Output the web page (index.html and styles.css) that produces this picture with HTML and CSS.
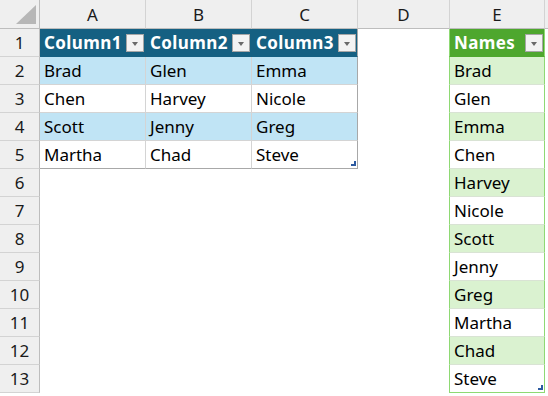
FILE: index.html
```html
<!DOCTYPE html>
<html>
<head>
<meta charset="utf-8">
<link rel="stylesheet" href="styles.css">
</head>
<body>
<div class="sheet">
  <div class="corner"><span class="tri"></span></div>
  <div class="ch">A</div><div class="ch">B</div><div class="ch">C</div><div class="ch">D</div><div class="ch">E</div><div class="ch ch-rest"></div>

  <div class="rh">1</div>
  <div class="c th">Column1<span class="fb"></span></div>
  <div class="c th">Column2<span class="fb"></span></div>
  <div class="c th tr">Column3<span class="fb"></span></div>
  <div class="c"></div>
  <div class="c gh">Names<span class="fb"></span></div>
  <div class="c"></div>

  <div class="rh">2</div>
  <div class="c bb">Brad</div><div class="c bb">Glen</div><div class="c bb tr">Emma</div>
  <div class="c"></div><div class="c gb gband">Brad</div><div class="c"></div>

  <div class="rh">3</div>
  <div class="c bw">Chen</div><div class="c bw">Harvey</div><div class="c bw tr">Nicole</div>
  <div class="c"></div><div class="c gb">Glen</div><div class="c"></div>

  <div class="rh">4</div>
  <div class="c bb">Scott</div><div class="c bb">Jenny</div><div class="c bb tr">Greg</div>
  <div class="c"></div><div class="c gb gband">Emma</div><div class="c"></div>

  <div class="rh">5</div>
  <div class="c bw last">Martha</div><div class="c bw last">Chad</div><div class="c bw last tr">Steve<span class="handle"></span></div>
  <div class="c"></div><div class="c gb">Chen</div><div class="c"></div>

  <div class="rh">6</div>
  <div class="c"></div><div class="c"></div><div class="c"></div><div class="c"></div><div class="c gb gband">Harvey</div><div class="c"></div>
  <div class="rh">7</div>
  <div class="c"></div><div class="c"></div><div class="c"></div><div class="c"></div><div class="c gb">Nicole</div><div class="c"></div>
  <div class="rh">8</div>
  <div class="c"></div><div class="c"></div><div class="c"></div><div class="c"></div><div class="c gb gband">Scott</div><div class="c"></div>
  <div class="rh">9</div>
  <div class="c"></div><div class="c"></div><div class="c"></div><div class="c"></div><div class="c gb">Jenny</div><div class="c"></div>
  <div class="rh">10</div>
  <div class="c"></div><div class="c"></div><div class="c"></div><div class="c"></div><div class="c gb gband">Greg</div><div class="c"></div>
  <div class="rh">11</div>
  <div class="c"></div><div class="c"></div><div class="c"></div><div class="c"></div><div class="c gb">Martha</div><div class="c"></div>
  <div class="rh">12</div>
  <div class="c"></div><div class="c"></div><div class="c"></div><div class="c"></div><div class="c gb gband">Chad</div><div class="c"></div>
  <div class="rh">13</div>
  <div class="c"></div><div class="c"></div><div class="c"></div><div class="c"></div><div class="c gb glast">Steve<span class="handle"></span></div><div class="c"></div>
</div>
</body>
</html>
```
FILE: styles.css
```css
* { box-sizing: border-box; }
html, body { margin: 0; padding: 0; background: #fff; }
body { font-family: "Noto Sans", "Liberation Sans", sans-serif; font-size: 17px; color: #000; }

.sheet {
  display: grid;
  grid-template-columns: 40px 106px 106px 106px 92px 95px 1fr;
  grid-template-rows: 29px;
  grid-auto-rows: 28px;
  width: 548px;
  height: 396px;
  overflow: hidden;
}

.corner {
  position: relative;
  background: #efefef;
  border-right: 1px solid #bdbdbd;
  border-bottom: 1px solid #bdbdbd;
}
.tri {
  position: absolute;
  right: 3px;
  bottom: 4px;
  width: 20px;
  height: 19px;
  background: #b7b7b7;
  clip-path: polygon(100% 0, 100% 100%, 0 100%);
}

.ch {
  background: #efefef;
  border-right: 1px solid #d3d3d3;
  border-bottom: 1px solid #bdbdbd;
  display: flex;
  align-items: center;
  justify-content: center;
  color: #1a1a1a;
  padding-top: 1px;
}
.ch-rest { border-right: none; }

.rh {
  background: #efefef;
  border-right: 1px solid #bdbdbd;
  border-bottom: 1px solid #d3d3d3;
  display: flex;
  align-items: flex-end;
  justify-content: center;
  padding-bottom: 2px;
  color: #1a1a1a;
}

.c {
  position: relative;
  border-right: 1px solid transparent;
  border-bottom: 1px solid transparent;
  display: flex;
  align-items: flex-end;
  padding: 0 0 2px 4px;
  white-space: nowrap;
}

.th {
  background: #156082;
  color: #fff;
  font-weight: 700;
  letter-spacing: 0.4px;
  border-bottom-color: #156082;
}
.bb { background: #c0e4f5; border-right-color: #d4d4d4; border-bottom-color: #d4d4d4; }
.bw { border-right-color: #d4d4d4; border-bottom-color: #d4d4d4; }
.bw.last { border-bottom-color: #a8a8a8; }
.tr { border-right-color: #a8a8a8; }

.gh {
  background: #4ea72e;
  color: #fff;
  font-weight: 700;
  letter-spacing: 0.4px;
  border-left: 1px solid #8ed973;
  border-right: 1px solid #8ed973;
  border-bottom-color: #4ea72e;
  margin-left: -1px;
}
.gb {
  border-left: 1px solid #8ed973;
  border-right: 1px solid #8ed973;
  border-bottom-color: #d9e3d4;
  margin-left: -1px;
}
.gband { background: #daf2d0; }
.glast { border-bottom-color: #8ed973; }

.fb {
  position: absolute;
  right: 1px;
  top: 5px;
  width: 18px;
  height: 18px;
  background: #f3f3f3;
  border: 1px solid #a6a6a6;
}
.fb::after {
  content: "";
  position: absolute;
  left: 5px;
  top: 7px;
  border-left: 3px solid transparent;
  border-right: 3px solid transparent;
  border-top: 4px solid #6a6a6a;
}

.handle {
  position: absolute;
  right: 1px;
  bottom: 2px;
  width: 5px;
  height: 5px;
  background: #2c5aa0;
  clip-path: polygon(60% 0, 100% 0, 100% 100%, 0 100%, 0 60%, 60% 60%);
}
```
